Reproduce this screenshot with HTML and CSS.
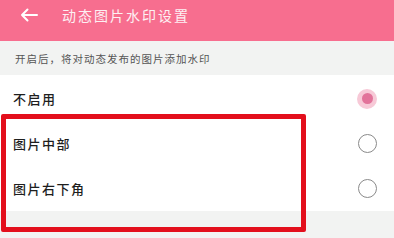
FILE: index.html
```html
<!DOCTYPE html>
<html>
<head>
    <meta charset="utf-8">
    <link rel="stylesheet" href="styles.css">
</head>
<body>
    <div class="header">
        <svg class="back" width="18" height="14" viewBox="0 0 18 14">
            <path d="M17 7H2M7.5 1.5L2 7l5.5 5.5" fill="none" stroke="#fff" stroke-width="2" stroke-linecap="round" stroke-linejoin="round"/>
        </svg>
        <div class="title">动态图片水印设置</div>
    </div>

    <div class="hint">开启后，将对动态发布的图片添加水印</div>

    <div class="list">
        <div class="row">
            <span class="label">不启用</span>
            <span class="radio checked"></span>
        </div>
        <div class="row">
            <span class="label">图片中部</span>
            <span class="radio"></span>
        </div>
        <div class="row">
            <span class="label">图片右下角</span>
            <span class="radio"></span>
        </div>
    </div>

    <div class="mark"></div>
</body>
</html>
```

FILE: styles.css
```css
body {
    margin: 0;
    background-color: #f2f3f2;
    font-family: "Noto Sans CJK SC", "Noto Sans", sans-serif;
    position: relative;
    height: 238px;
    overflow: hidden;
}

.header {
    height: 41px;
    background-color: #f76e8f;
    display: flex;
    align-items: center;
    padding: 0 0 12px 20px;
    box-sizing: border-box;
}

.back {
    margin-right: 24px;
}

.title {
    color: #fdf0f3;
    font-size: 14px;
    letter-spacing: 2px;
}

.hint {
    height: 34px;
    display: flex;
    align-items: center;
    padding-left: 15px;
    font-size: 10.5px;
    letter-spacing: 1px;
    color: #555;
}

.list {
    background-color: #fff;
    padding-top: 1px;
}

.row {
    height: 45px;
    display: flex;
    align-items: center;
    justify-content: space-between;
    padding: 0 17px 0 13px;
}

.label {
    font-size: 13px;
    letter-spacing: 1.5px;
    color: #1e1e1e;
    font-weight: 500;
}

.radio {
    width: 17px;
    height: 17px;
    border: 1.5px solid #8a8a8a;
    border-radius: 50%;
    box-sizing: content-box;
}

.radio.checked {
    border: 2px solid #f7c9d7;
    width: 16px;
    height: 16px;
    background-color: #f7c9d7;
    display: flex;
    justify-content: center;
    align-items: center;
}

.radio.checked::after {
    content: "";
    width: 11px;
    height: 11px;
    border-radius: 50%;
    background-color: #e2739a;
}

.mark {
    position: absolute;
    left: 1px;
    top: 114px;
    width: 295px;
    height: 108px;
    border: 5px solid #e30f1c;
    border-radius: 2px;
}
```
